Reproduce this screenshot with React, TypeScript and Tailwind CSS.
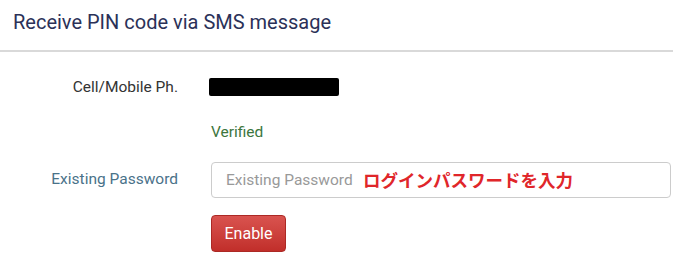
export default function App() {
  return (
    <div className="min-h-screen bg-white" style={{ fontFamily: 'Roboto, "Noto Sans", sans-serif' }}>
      <div className="w-[673px]">
        {/* Header */}
        <div className="h-[52px] border-b-2 border-[#d9d9d9] px-[13px] pt-[10px]">
          <h1 className="text-[20px] leading-[24px] text-[#2b3158]">Receive PIN code via SMS message</h1>
        </div>

        {/* Form */}
        <div className="grid grid-cols-[178px_1fr] gap-x-[33px] pt-[26px]">
          <div className="text-right text-[15.5px] leading-[18px] text-[#333]">Cell/Mobile Ph.</div>
          <div className="flex items-center">
            <div className="-ml-[2px] h-[18px] w-[130px] rounded-[2px] bg-black" />
          </div>

          <div />
          <div className="mt-[27px] text-[15.5px] leading-[18px] text-[#3c763d]">Verified</div>

          <div className="mt-[21px] flex h-[36px] items-center justify-end text-[15.5px] text-[#4a7289]">
            Existing Password
          </div>
          <div className="relative mt-[21px] w-[460px]">
            <input
              type="password"
              placeholder="Existing Password"
              className="h-[36px] w-full rounded-[4px] border border-[#ccc] px-[14px] text-[15.5px] text-[#555] placeholder:text-[#999]"
            />
            <span
              className="pointer-events-none absolute left-[152px] top-[6px] text-[17.5px] font-bold leading-[24px] text-[#e0262a]"
              style={{ fontFamily: '"Noto Sans CJK JP", sans-serif' }}
            >
              ログインパスワードを入力
            </span>
          </div>

          <div />
          <div className="mt-[17px]">
            <button className="h-[37px] w-[75px] rounded-[4px] border border-[#ac2925] bg-gradient-to-b from-[#d9534f] to-[#c12e2a] text-[16px] text-white">
              Enable
            </button>
          </div>
        </div>
      </div>
    </div>
  )
}
